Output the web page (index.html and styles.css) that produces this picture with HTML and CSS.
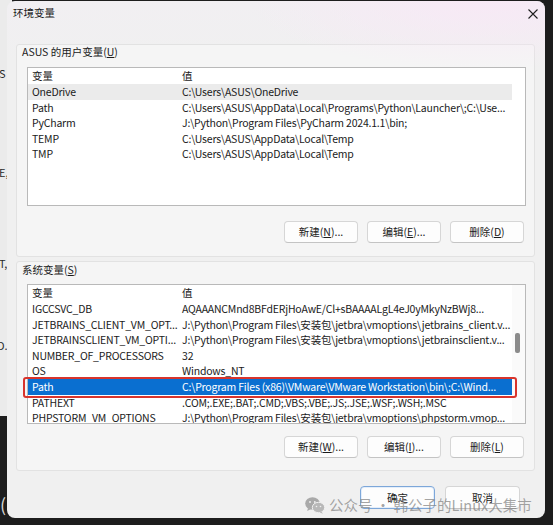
FILE: index.html
```html
<!DOCTYPE html>
<html lang="zh-CN">
<head>
<meta charset="utf-8">
<title>环境变量</title>
<link rel="stylesheet" href="styles.css">
</head>
<body>
<div class="desktop">
  <div class="bg-window">
    <span class="bg-txt s1">S</span>
    <span class="bg-txt s2">E,</span>
    <span class="bg-txt s3">T,</span>
    <span class="bg-txt s4">D.</span>
  </div>
  <span class="bg-glyph">(</span>

  <div class="dialog">
    <div class="titlebar">
      <span class="title">环境变量</span>
      <svg class="close" width="10" height="10" viewBox="0 0 10 10"><path d="M0.5 0.5 L9.5 9.5 M9.5 0.5 L0.5 9.5" stroke="#1f1f1f" stroke-width="1.1" fill="none"/></svg>
    </div>

    <div class="content">
      <section class="group group-user">
        <div class="group-label">ASUS 的用户变量(<u>U</u>)</div>
        <div class="list list-user">
          <div class="rows">
            <div class="row head"><span class="c1">变量</span><span class="c2">值</span></div>
            <div class="row hover"><span class="c1">OneDrive</span><span class="c2">C:\Users\ASUS\OneDrive</span></div>
            <div class="row"><span class="c1">Path</span><span class="c2">C:\Users\ASUS\AppData\Local\Programs\Python\Launcher\;C:\Use...</span></div>
            <div class="row"><span class="c1">PyCharm</span><span class="c2">J:\Python\Program Files\PyCharm 2024.1.1\bin;</span></div>
            <div class="row"><span class="c1">TEMP</span><span class="c2">C:\Users\ASUS\AppData\Local\Temp</span></div>
            <div class="row"><span class="c1">TMP</span><span class="c2">C:\Users\ASUS\AppData\Local\Temp</span></div>
          </div>
          <div class="lane"></div>
        </div>
        <div class="btns">
          <button class="btn">新建(<u>N</u>)...</button>
          <button class="btn">编辑(<u>E</u>)...</button>
          <button class="btn">删除(<u>D</u>)</button>
        </div>
      </section>

      <section class="group group-sys">
        <div class="group-label">系统变量(<u>S</u>)</div>
        <div class="list list-sys">
          <div class="rows">
            <div class="row head"><span class="c1">变量</span><span class="c2">值</span></div>
            <div class="row"><span class="c1">IGCCSVC_DB</span><span class="c2">AQAAANCMnd8BFdERjHoAwE/Cl+sBAAAALgL4eJ0yMkyNzBWj8...</span></div>
            <div class="row"><span class="c1">JETBRAINS_CLIENT_VM_OPT...</span><span class="c2">J:\Python\Program Files\安装包\jetbra\vmoptions\jetbrains_client.v...</span></div>
            <div class="row"><span class="c1">JETBRAINSCLIENT_VM_OPTI...</span><span class="c2">J:\Python\Program Files\安装包\jetbra\vmoptions\jetbrainsclient.v...</span></div>
            <div class="row"><span class="c1">NUMBER_OF_PROCESSORS</span><span class="c2">32</span></div>
            <div class="row"><span class="c1">OS</span><span class="c2">Windows_NT</span></div>
            <div class="row selected"><span class="c1">Path</span><span class="c2">C:\Program Files (x86)\VMware\VMware Workstation\bin\;C:\Wind...</span></div>
            <div class="row"><span class="c1">PATHEXT</span><span class="c2">.COM;.EXE;.BAT;.CMD;.VBS;.VBE;.JS;.JSE;.WSF;.WSH;.MSC</span></div>
            <div class="row"><span class="c1">PHPSTORM_VM_OPTIONS</span><span class="c2">J:\Python\Program Files\安装包\jetbra\vmoptions\phpstorm.vmop...</span></div>
          </div>
          <div class="lane track"><div class="thumb"></div></div>
          <div class="highlight-box"></div>
        </div>
        <div class="btns">
          <button class="btn">新建(<u>W</u>)...</button>
          <button class="btn">编辑(<u>I</u>)...</button>
          <button class="btn">删除(<u>L</u>)</button>
        </div>
      </section>

      <div class="footer">
        <button class="btn btn-wide btn-default">确定</button>
        <button class="btn btn-wide">取消</button>
      </div>
    </div>

    <div class="watermark">
      <svg class="wx" width="20" height="17" viewBox="0 0 20 17">
        <ellipse cx="7.5" cy="6.5" rx="7.3" ry="6.2" fill="#a9a9a9"/>
        <path d="M3 11 L2.2 14 L6 12 Z" fill="#a9a9a9"/>
        <ellipse cx="13.5" cy="10.5" rx="6.2" ry="5.2" fill="#b8b8b8" stroke="#f0f0f0" stroke-width="1"/>
        <path d="M16.5 14.5 L17.8 16.8 L14.5 15.3 Z" fill="#b8b8b8"/>
        <circle cx="5" cy="5" r="0.9" fill="#f0f0f0"/>
        <circle cx="9.8" cy="5" r="0.9" fill="#f0f0f0"/>
        <circle cx="11.5" cy="9.5" r="0.8" fill="#f0f0f0"/>
        <circle cx="15.5" cy="9.5" r="0.8" fill="#f0f0f0"/>
      </svg>
      <span class="wm-text">公众号 · 韩公子的Linux大集市</span>
    </div>
  </div>
</div>
</body>
</html>
```

FILE: styles.css
```css
* { box-sizing: border-box; }
html, body { margin: 0; padding: 0; }
body {
  width: 553px;
  height: 525px;
  overflow: hidden;
  background: #1d1d1d;
  font-family: "Noto Sans CJK SC", "Noto Sans", sans-serif;
  font-size: 10.5px;
  color: #1b1b1b;
}
.desktop {
  position: relative;
  width: 553px;
  height: 525px;
}

/* background window peeking at the left edge */
.bg-window {
  position: absolute;
  left: 0;
  top: 0;
  width: 12px;
  height: 416px;
  background: #ebebeb;
  overflow: hidden;
}
.bg-txt {
  position: absolute;
  left: -1px;
  font-size: 11px;
  line-height: 14px;
  color: #2a2a2a;
}
.s1 { top: 66px; }
.s2 { top: 165px; }
.s3 { top: 256px; }
.s4 { top: 338px; left: -3px; }
.bg-glyph {
  position: absolute;
  left: 0;
  top: 494px;
  font-size: 18px;
  line-height: 20px;
  color: #d8d8d8;
}

/* dialog window */
.dialog {
  position: absolute;
  left: 7px;
  top: 1px;
  width: 538px;
  height: 517px;
  border-radius: 8px;
  background: linear-gradient(180deg, #f1eff2 0px, #f0f0f0 60px, #f0f0f0 100%);
  overflow: hidden;
  display: flex;
  flex-direction: column;
}
.dialog::before {
  content: "";
  position: absolute;
  right: 0;
  top: 0;
  width: 300px;
  height: 70px;
  background: radial-gradient(ellipse at 80% 0%, rgba(248, 232, 246, 0.9), rgba(248, 232, 246, 0) 70%);
  pointer-events: none;
}
.titlebar {
  position: relative;
  height: 24px;
  display: flex;
  align-items: center;
  justify-content: space-between;
  padding: 0 7px 0 6px;
  flex: none;
}
.title {
  font-size: 10.5px;
  line-height: 14px;
  color: #1a1a1a;
}
.close { display: block; margin-top: 1px; }

.content {
  flex: 1;
  display: flex;
  flex-direction: column;
  padding: 19px 10px 0 9px;
}

.group {
  border: 1px solid #e2e2e2;
  background: #f5f5f5;
  border-radius: 3px;
  display: flex;
  flex-direction: column;
  padding: 0 8px 13px 10px;
}
.group-sys {
  margin-top: 4px;
  padding-bottom: 12px;
}
.group-label {
  font-size: 10.5px;
  line-height: 14px;
  color: #1b1b1b;
  margin-left: -5px;
}
.group-sys .group-label { margin-top: 1px; }
u { text-decoration: underline; text-underline-offset: 1px; }

.list {
  position: relative;
  margin-top: 8px;
  background: #ffffff;
  border: 1px solid #b9b9b9;
  display: flex;
}
.list-user { height: 139px; }
.list-sys { height: 140px; margin-top: 7px; }
.rows {
  flex: 1;
  min-width: 0;
  overflow: hidden;
}
.lane {
  width: 13px;
  flex: none;
}
.track {
  background: #fafafa;
  padding: 48px 0 0 3px;
}
.thumb {
  width: 5px;
  height: 20px;
  background: #8b8b8b;
  border-radius: 2px;
}

.row {
  display: flex;
  height: 15.6px;
  line-height: 15.6px;
  white-space: nowrap;
  color: #1b1b1b;
  letter-spacing: -0.2px;
}
.row.head {
  height: 16px;
  line-height: 16px;
  letter-spacing: 0;
}
.row.hover { background: #ebebeb; }
.row.selected {
  background: #0a6fd0;
  color: #ffffff;
}
.c1 {
  width: 150px;
  flex: none;
  padding-left: 4px;
  overflow: hidden;
}
.c2 {
  flex: 1;
  min-width: 0;
  padding-left: 4px;
  overflow: hidden;
}
.highlight-box {
  position: absolute;
  left: -5px;
  top: 92px;
  width: 494px;
  height: 21px;
  border: 2px solid #d8342c;
  border-radius: 3px;
  pointer-events: none;
}

.btns {
  display: flex;
  justify-content: flex-end;
  gap: 9px;
  margin-top: 15px;
  padding-right: 2px;
}
.group-sys .btns { margin-top: 12px; }
.btn {
  width: 74px;
  height: 22px;
  padding: 0;
  font-family: inherit;
  font-size: 10.5px;
  line-height: 20px;
  color: #1b1b1b;
  background: #fdfdfd;
  border: 1px solid #d6d6d6;
  border-bottom-color: #c4c4c4;
  border-radius: 4px;
}
.footer {
  display: flex;
  justify-content: flex-end;
  gap: 10px;
  margin-top: 15px;
  padding-right: 15px;
}
.btn-wide {
  width: 75px;
  height: 23px;
}
.btn-default {
  border-color: #7da7d9;
  box-shadow: inset 0 0 0 1px #e4eefa;
}

.watermark {
  position: absolute;
  left: 298px;
  top: 494px;
  display: flex;
  align-items: center;
  gap: 4px;
  pointer-events: none;
}
.wx { display: block; }
.wm-text {
  font-size: 14.5px;
  line-height: 20px;
  color: rgba(130, 130, 130, 0.72);
  white-space: nowrap;
}
```
